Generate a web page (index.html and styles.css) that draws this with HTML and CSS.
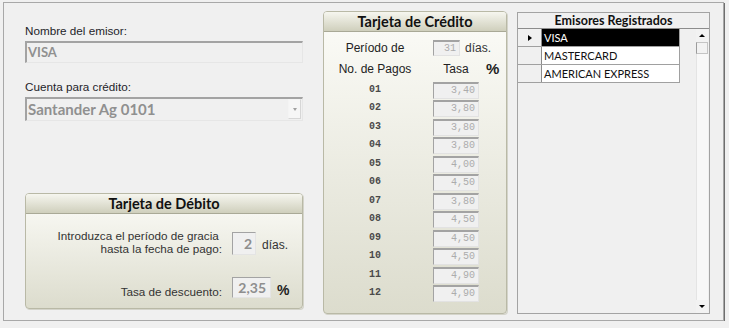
FILE: index.html
```html
<!DOCTYPE html>
<html lang="es">
<head>
    <meta charset="UTF-8">
    <meta name="viewport" content="width=device-width, initial-scale=1.0">
    <title>Emisores de tarjeta</title>
    <link rel="stylesheet" href="styles.css">
</head>
<body>
    <div class="frame">
        <div class="col-left">
            <div class="lbl">Nombre del emisor:</div>
            <div class="field field-name">VISA</div>
            <div class="lbl lbl-second">Cuenta para crédito:</div>
            <div class="field combo">
                <span>Santander Ag 0101</span>
                <span class="combo-btn"><span class="arrow-down-gray"></span></span>
            </div>

            <section class="panel debit">
                <div class="panel-title">Tarjeta de Débito</div>
                <div class="debit-body">
                    <div class="debit-label">Introduzca el período de gracia&nbsp;<br>hasta la fecha de pago:</div>
                    <div class="box-line">
                        <div class="box box-days">2</div>
                        <span class="unit">días.</span>
                    </div>
                    <div class="debit-label">Tasa de descuento:</div>
                    <div class="box-line">
                        <div class="box box-rate">2,35</div>
                        <span class="pct">%</span>
                    </div>
                </div>
            </section>
        </div>

        <section class="panel credit">
            <div class="panel-title">Tarjeta de Crédito</div>
            <div class="credit-body">
                <div class="c-label">Período de</div>
                <div class="period">
                    <div class="rate rate-period">31</div>
                    <span class="unit">días.</span>
                </div>
                <div class="c-label">No. de Pagos</div>
                <div class="c-head">Tasa</div>
                <div class="pct pct-head">%</div>

                <div class="num">01</div><div class="rate">3,40</div><div></div>
                <div class="num">02</div><div class="rate">3,80</div><div></div>
                <div class="num">03</div><div class="rate">3,80</div><div></div>
                <div class="num">04</div><div class="rate">3,80</div><div></div>
                <div class="num">05</div><div class="rate">4,00</div><div></div>
                <div class="num">06</div><div class="rate">4,50</div><div></div>
                <div class="num">07</div><div class="rate">3,80</div><div></div>
                <div class="num">08</div><div class="rate">4,50</div><div></div>
                <div class="num">09</div><div class="rate">4,50</div><div></div>
                <div class="num">10</div><div class="rate">4,50</div><div></div>
                <div class="num">11</div><div class="rate">4,90</div><div></div>
                <div class="num">12</div><div class="rate">4,90</div><div></div>
            </div>
        </section>

        <section class="list">
            <div class="list-head">Emisores Registrados</div>
            <div class="list-body">
                <div class="grid">
                    <div class="row selected">
                        <div class="selector"><span class="arrow-right"></span></div>
                        <div class="cell">VISA</div>
                    </div>
                    <div class="row">
                        <div class="selector"></div>
                        <div class="cell">MASTERCARD</div>
                    </div>
                    <div class="row">
                        <div class="selector"></div>
                        <div class="cell">AMERICAN EXPRESS</div>
                    </div>
                </div>
                <div class="scroll">
                    <div class="scroll-btn"><span class="arrow-up"></span></div>
                    <div class="scroll-thumb"></div>
                    <div class="scroll-track"></div>
                    <div class="scroll-btn"><span class="arrow-down"></span></div>
                </div>
            </div>
        </section>
    </div>
</body>
</html>
```

FILE: styles.css
```css
body {
    font-family: "Liberation Sans", Arial, sans-serif;
    font-size: 11.7px;
    background-color: #f0f0f0;
    color: #222;
    margin: 0;
    padding: 0;
}

.frame {
    display: flex;
    align-items: flex-start;
    width: 719px;
    height: 317px;
    margin: 2px 0 0 3px;
    border: 1px solid #a8a8a8;
    box-shadow: 1px 1px 0 #6f6f6f;
    background-color: #f0f0f0;
}

/* left column */

.col-left {
    display: flex;
    flex-direction: column;
    width: 278px;
    margin-left: 21px;
    padding-top: 21px;
}

.lbl {
    line-height: 14px;
    color: #1e1e2a;
}

.lbl-second {
    margin-top: 17px;
}

.field {
    box-sizing: border-box;
    margin-top: 3px;
    border-style: solid;
    border-width: 2px 1px 1px 2px;
    border-color: #a3a3a3 #e6e6e6 #e6e6e6 #a3a3a3;
    background-color: #f0f0f0;
    font-family: Lato, sans-serif;
    font-weight: bold;
    color: #909090;
}

.field-name {
    height: 22px;
    padding-left: 1px;
    font-size: 13px;
    line-height: 19px;
}

.combo {
    display: flex;
    justify-content: space-between;
    height: 24px;
    padding-left: 1px;
    font-size: 15px;
    line-height: 20px;
}

.combo-btn {
    display: flex;
    align-items: center;
    justify-content: center;
    width: 11px;
    margin: 0 1px 1px 0;
    border: 1px solid #d6d6d6;
    border-left-color: #f4f4f4;
    border-top-color: #f4f4f4;
    background-color: #f6f6f6;
}

.arrow-down-gray {
    border-top: 3px solid #a0a0a0;
    border-left: 2.5px solid transparent;
    border-right: 2.5px solid transparent;
}

/* panels */

.panel {
    box-sizing: border-box;
    border: 1px solid #b9b9a6;
    border-radius: 4px;
    box-shadow: 1px 1px 0 #d4d4ca;
    background: linear-gradient(#fcfcf8, #dcdccd);
    overflow: hidden;
}

.panel-title {
    height: 19px;
    border-bottom: 1px solid #a9a996;
    background: linear-gradient(#f6f6ef, #cfcfbc);
    font-family: Lato, sans-serif;
    font-size: 14.5px;
    font-weight: bold;
    line-height: 19px;
    text-align: center;
    color: #111;
}

.debit {
    height: 116px;
    margin-top: 72px;
}

.debit-body {
    display: grid;
    grid-template-columns: 196px 1fr;
    grid-template-rows: 23px 21px;
    column-gap: 10px;
    row-gap: 22px;
    padding-top: 18px;
}

.debit-label {
    align-self: end;
    line-height: 13px;
    text-align: right;
    color: #333;
}

.box-line {
    display: flex;
    align-items: center;
    gap: 6px;
}

.box {
    box-sizing: border-box;
    height: 100%;
    border-style: solid;
    border-width: 1px;
    border-color: #a3a3a3 #e4e4e4 #e4e4e4 #a3a3a3;
    background-color: #f0f0f0;
    font-family: Lato, sans-serif;
    font-size: 14px;
    font-weight: bold;
    text-align: right;
    color: #8e8e8e;
}

.box-days {
    width: 24px;
    padding-right: 3px;
    line-height: 21px;
}

.box-rate {
    width: 39px;
    padding-right: 4px;
    line-height: 19px;
}

.unit {
    color: #333;
    font-size: 12px;
}

.debit .unit {
    margin-top: 2px;
}

.pct {
    font-family: "Liberation Sans", Arial, sans-serif;
    font-size: 14px;
    font-weight: bold;
    color: #222;
}

.debit .pct {
    margin-top: 4px;
}

/* credit card */

.credit {
    width: 184px;
    height: 303px;
    margin-left: 20px;
    margin-top: 8px;
}

.credit-body {
    display: grid;
    grid-template-columns: 102px 46px 1fr;
    grid-template-rows: 16px 25.5px repeat(12, 18.5px);
    column-gap: 7px;
    align-items: center;
    padding-top: 8px;
}

.c-label {
    font-size: 12px;
    text-align: center;
    color: #222;
}

.period {
    grid-column: 2 / 4;
    display: flex;
    align-items: center;
    gap: 5px;
}

.c-head {
    font-size: 12px;
    text-align: center;
    color: #222;
}

.pct-head {
    font-size: 15px;
}

.num {
    align-self: start;
    font-family: "Liberation Mono", monospace;
    font-size: 10px;
    font-weight: bold;
    line-height: 16px;
    text-align: center;
    color: #4a4a4a;
}

.rate {
    box-sizing: border-box;
    align-self: start;
    height: 17px;
    padding-right: 3px;
    border-style: solid;
    border-width: 2px 1px 1px 1px;
    border-color: #a3a3a3 #e2e2e2 #e2e2e2 #a3a3a3;
    background-color: #f0f0f0;
    font-family: "Liberation Mono", monospace;
    font-size: 10px;
    line-height: 14px;
    text-align: right;
    color: #acacac;
}

.rate-period {
    width: 27px;
    height: 16px;
    align-self: center;
}

/* registered list */

.list {
    width: 193px;
    height: 302px;
    box-sizing: border-box;
    margin-left: 10px;
    margin-top: 9px;
    border: 1px solid #a3a3a3;
    background-color: #f0f0f0;
}

.list-head {
    height: 15px;
    border-bottom: 1px solid #8c8c8c;
    font-family: Lato, sans-serif;
    font-size: 12.5px;
    font-weight: bold;
    line-height: 15px;
    text-align: center;
    color: #111;
}

.list-body {
    display: flex;
    justify-content: space-between;
    height: 284px;
}

.grid {
    width: 162px;
}

.row {
    display: flex;
    height: 17px;
    border-bottom: 1px solid #a0a0a0;
}

.selector {
    display: flex;
    align-items: center;
    justify-content: center;
    width: 23px;
    border-right: 1px solid #8c8c8c;
    background-color: #f0f0f0;
}

.arrow-right {
    border-left: 4px solid #000;
    border-top: 3.5px solid transparent;
    border-bottom: 3.5px solid transparent;
}

.cell {
    flex: 1;
    padding-left: 2px;
    border-right: 1px solid #a0a0a0;
    background-color: #fff;
    font-family: Lato, sans-serif;
    font-size: 11px;
    line-height: 17px;
    color: #111;
}

.selected .cell {
    background-color: #000;
    color: #fff;
}

.scroll {
    display: flex;
    flex-direction: column;
    width: 12px;
    margin-right: 1px;
    background-color: #f8f8f8;
}

.scroll-btn {
    display: flex;
    align-items: center;
    justify-content: center;
    height: 13px;
    background-color: #f2f2f2;
}

.scroll-thumb {
    box-sizing: border-box;
    height: 12px;
    border: 1px solid #c4c4c4;
    border-left-color: #9c9c9c;
    background-color: #f2f2f2;
}

.scroll-track {
    flex: 1;
    border-left: 1px solid #e4e4e4;
}

.arrow-up {
    border-bottom: 3px solid #000;
    border-left: 3px solid transparent;
    border-right: 3px solid transparent;
}

.arrow-down {
    border-top: 3px solid #000;
    border-left: 3px solid transparent;
    border-right: 3px solid transparent;
}
```
